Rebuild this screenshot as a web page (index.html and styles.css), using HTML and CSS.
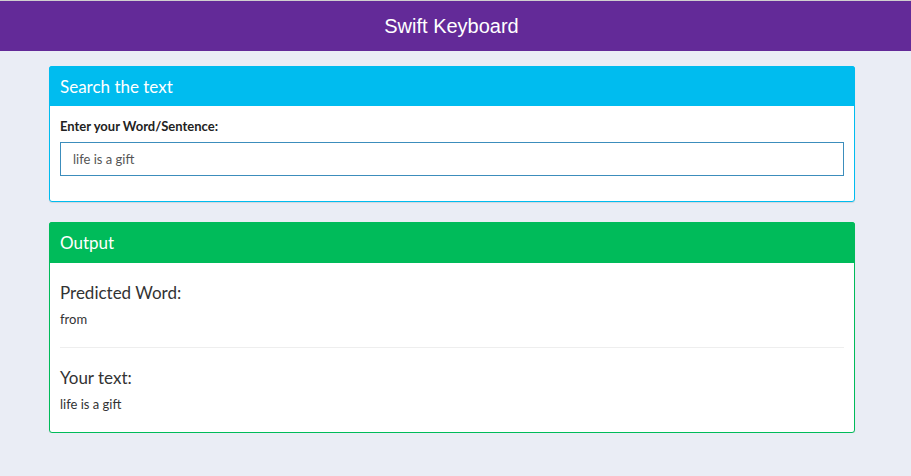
FILE: index.html
```html
<!DOCTYPE html>
<html>
<head>
<meta charset="utf-8">
<link rel="stylesheet" href="styles.css">
</head>
<body>
<header class="topbar"><h1 class="title">Swift Keyboard</h1></header>
<main class="content">
  <section class="card card-info">
    <div class="card-head">Search the text</div>
    <div class="card-body">
      <div class="form-group">
        <label class="label">Enter your Word/Sentence:</label>
        <div class="input">life is a gift</div>
      </div>
    </div>
  </section>
  <section class="card card-success">
    <div class="card-head">Output</div>
    <div class="card-body">
      <h4 class="h4">Predicted Word:</h4>
      <p class="text">from</p>
      <hr class="rule">
      <h4 class="h4">Your text:</h4>
      <p class="text">life is a gift</p>
    </div>
  </section>
</main>
</body>
</html>
```
FILE: styles.css
```css
* { box-sizing: border-box; }
html, body { margin: 0; padding: 0; }
body {
  background: #eaedf5;
  font-family: Lato, "Open Sans", sans-serif;
  color: #333;
  font-size: 13px;
  border-top: 1px solid #cfcfcf;
}
.topbar {
  background: #632a98;
  height: 50px;
  padding-right: 8px;
  display: flex;
  align-items: center;
  justify-content: center;
}
.title {
  margin: 0;
  font-family: "Liberation Sans", Arial, sans-serif;
  font-weight: normal;
  font-size: 20px;
  color: #fff;
}
.content {
  padding: 15px 0 0 49px;
  display: flex;
  flex-direction: column;
  gap: 20px;
}
.card {
  width: 806px;
  background: #fff;
  border: 1px solid;
  border-radius: 3px;
  box-shadow: 0 1px 1px rgba(0,0,0,0.1);
}
.card-info { border-color: #00bcef; }
.card-success { border-color: #00bb5a; }
.card-head {
  height: 40px;
  margin: -1px -1px 0;
  border-radius: 3px 3px 0 0;
  padding: 0 10px 0 11px;
  display: flex;
  align-items: center;
  color: #fff;
  font-size: 17px;
}
.card-info .card-head { background: #00bcef; }
.card-success .card-head { background: #00bb5a; height: 41px; }
.card-body { padding: 10px; }
.form-group { margin-bottom: 15px; }
.label {
  display: block;
  font-weight: bold;
  font-size: 13px;
  line-height: 21px;
  margin-bottom: 5px;
  color: #222;
}
.input {
  height: 34px;
  border: 1px solid #3c8dbc;
  padding: 0 12px;
  display: flex;
  align-items: center;
  color: #555;
  font-size: 13px;
}
.h4 {
  margin: 10px 0 7px;
  font-size: 17px;
  font-weight: normal;
  line-height: 20px;
}
.text {
  margin: 0;
  line-height: 18px;
}
.rule {
  border: 0;
  border-top: 1px solid #eee;
  margin: 19px 0 19px;
}
.rule + .h4 { margin-top: 20px; }
.card-success .card-body { padding-bottom: 19px; }
```
